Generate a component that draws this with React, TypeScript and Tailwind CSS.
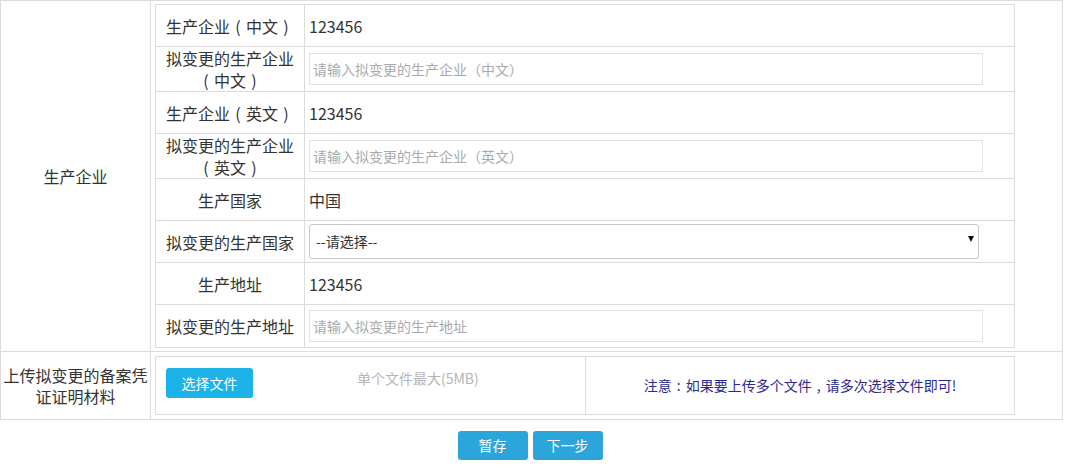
import React from "react";

const font = { fontFamily: '"Noto Sans CJK SC", "Noto Sans", sans-serif' };

// full-width punctuation drawn centred in a 1em box, as the original font does
const PUNCT: Record<string, string> = { "（": "(", "）": ")", "：": ":", "，": "," };

function Cjk({ text }: { text: string }) {
  return (
    <>
      {Array.from(text).map((ch, i) =>
        PUNCT[ch] ? (
          <span key={i} className="inline-block w-[1em] text-center">
            {PUNCT[ch]}
          </span>
        ) : (
          <React.Fragment key={i}>{ch}</React.Fragment>
        )
      )}
    </>
  );
}

type Row =
  | { label: string[]; kind: "text"; value: string }
  | { label: string[]; kind: "input"; placeholder: string }
  | { label: string[]; kind: "select" };

const rows: Row[] = [
  { label: ["生产企业（中文）"], kind: "text", value: "123456" },
  {
    label: ["拟变更的生产企业", "（中文）"],
    kind: "input",
    placeholder: "请输入拟变更的生产企业（中文）",
  },
  { label: ["生产企业（英文）"], kind: "text", value: "123456" },
  {
    label: ["拟变更的生产企业", "（英文）"],
    kind: "input",
    placeholder: "请输入拟变更的生产企业（英文）",
  },
  { label: ["生产国家"], kind: "text", value: "中国" },
  { label: ["拟变更的生产国家"], kind: "select" },
  { label: ["生产地址"], kind: "text", value: "123456" },
  { label: ["拟变更的生产地址"], kind: "input", placeholder: "请输入拟变更的生产地址" },
];

function Value({ row }: { row: Row }) {
  if (row.kind === "text") {
    return <span className="text-[16px] leading-[20px] text-[#333]">{row.value}</span>;
  }
  if (row.kind === "input") {
    return (
      <input
        placeholder={row.placeholder}
        className="h-[32px] w-[674px] border border-[#e2e2e2] bg-white pl-[3px] text-[14px] text-[#333] outline-none placeholder:text-[#aaa]"
        style={font}
      />
    );
  }
  return (
    <div className="relative w-[670px]">
      <select
        className="h-[35px] w-full appearance-none rounded-[3px] border border-[#c8c8c8] bg-white pl-[6px] text-[14px] text-[#333] outline-none"
        style={font}
        defaultValue=""
      >
        <option value="">--请选择--</option>
        <option value="cn">中国</option>
      </select>
      <span className="pointer-events-none absolute right-[5px] top-[12px] h-0 w-0 border-x-[3.5px] border-t-[6px] border-x-transparent border-t-[#111]" />
    </div>
  );
}

export default function App(): React.JSX.Element {
  return (
    <div className="w-[1063px] bg-white pb-[13px] text-[#333]" style={font}>
      <div className="border border-[#dcdcdc]">
        {/* 生产企业 */}
        <div className="flex">
          <div className="flex w-[150px] shrink-0 items-center justify-center border-r border-[#dcdcdc] text-[16px]">
            生产企业
          </div>
          <div className="pb-[3px] pl-[4px] pt-[3px]">
            <div className="w-[860px] border border-[#dcdcdc]">
              {rows.map((row, i) => (
                <div
                  key={i}
                  className={
                    "flex " +
                    (row.label.length > 1 ? "h-[45px] " : "h-[42px] ") +
                    (i < rows.length - 1 ? "border-b border-[#dcdcdc]" : "")
                  }
                >
                  <div className="flex w-[149px] shrink-0 flex-col items-center justify-center border-r border-[#dcdcdc] text-center text-[16px] leading-[22px]">
                    {row.label.map((line) => (
                      <span key={line} className="whitespace-nowrap">
                        <Cjk text={line} />
                      </span>
                    ))}
                  </div>
                  <div className="flex flex-1 items-center pl-[4px]">
                    <Value row={row} />
                  </div>
                </div>
              ))}
            </div>
          </div>
        </div>

        {/* 上传材料 */}
        <div className="flex border-t border-[#dcdcdc]">
          <div className="flex w-[150px] shrink-0 items-center justify-center border-r border-[#dcdcdc] px-[2px] text-center text-[16px] leading-[21px]">
            上传拟变更的备案凭证证明材料
          </div>
          <div className="py-[4px] pl-[4px]">
            <div className="flex h-[59px] w-[860px] border border-[#dcdcdc]">
              <div className="flex w-[430px] items-start border-r border-[#dcdcdc] pl-[10px] pt-[11px]">
                <button className="h-[30px] w-[87px] rounded-[3px] bg-[#1db3e9] text-[14px] text-white">
                  选择文件
                </button>
                <span className="ml-[104px] text-[14px] leading-[20px] text-[#b5b5b5]">
                  单个文件最大(5MB)
                </span>
              </div>
              <div className="flex flex-1 items-center justify-center text-[14px] text-[#2a2a90]">
                <span>
                  <Cjk text="注意：如果要上传多个文件，请多次选择文件即可!" />
                </span>
              </div>
            </div>
          </div>
        </div>
      </div>

      <div className="mt-[11px] flex justify-center gap-[5px] pr-[3px]">
        <button className="h-[29px] w-[70px] rounded-[3px] bg-[#2ca6da] text-[14px] text-white">
          暂存
        </button>
        <button className="h-[29px] w-[70px] rounded-[3px] bg-[#2ca6da] text-[14px] text-white">
          下一步
        </button>
      </div>
    </div>
  );
}
